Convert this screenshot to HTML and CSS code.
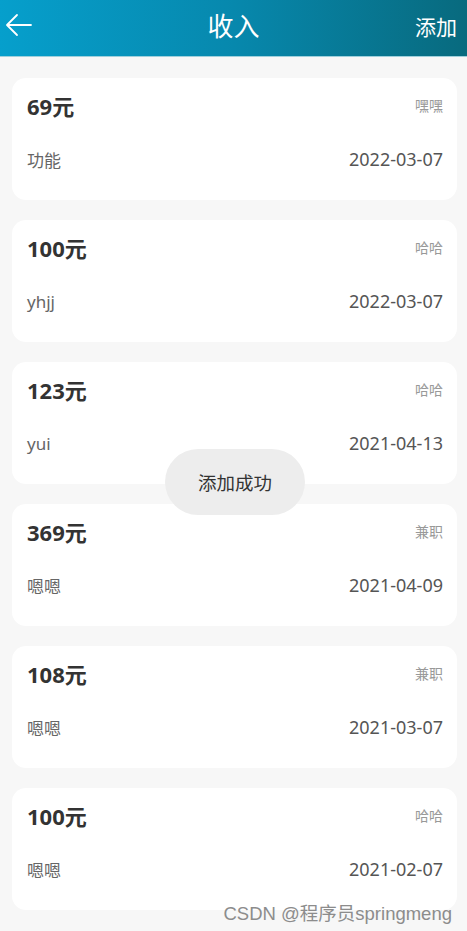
FILE: index.html
```html
<!DOCTYPE html>
<html lang="zh-CN">
<head>
<meta charset="utf-8">
<title>收入</title>
<link rel="stylesheet" href="styles.css">
</head>
<body>
<header class="topbar">
  <svg class="back" width="28" height="24" viewBox="0 0 28 24" fill="none" stroke="#fff" stroke-width="1.8" stroke-linecap="round" stroke-linejoin="round"><path d="M26 12H3M12 2L2 12l10 10"/></svg>
  <h1 class="title">收入</h1>
  <span class="add">添加</span>
</header>
<main class="list">
  <div class="card"><div class="row"><span class="amount">69元</span><span class="tag">嘿嘿</span></div><div class="row"><span class="note">功能</span><span class="date">2022-03-07</span></div></div>
  <div class="card"><div class="row"><span class="amount">100元</span><span class="tag">哈哈</span></div><div class="row"><span class="note">yhjj</span><span class="date">2022-03-07</span></div></div>
  <div class="card"><div class="row"><span class="amount">123元</span><span class="tag">哈哈</span></div><div class="row"><span class="note">yui</span><span class="date">2021-04-13</span></div></div>
  <div class="card"><div class="row"><span class="amount">369元</span><span class="tag">兼职</span></div><div class="row"><span class="note">嗯嗯</span><span class="date">2021-04-09</span></div></div>
  <div class="card"><div class="row"><span class="amount">108元</span><span class="tag">兼职</span></div><div class="row"><span class="note">嗯嗯</span><span class="date">2021-03-07</span></div></div>
  <div class="card"><div class="row"><span class="amount">100元</span><span class="tag">哈哈</span></div><div class="row"><span class="note">嗯嗯</span><span class="date">2021-02-07</span></div></div>
</main>
<div class="toast">添加成功</div>
<div class="watermark">CSDN @程序员springmeng</div>
</body>
</html>
```
FILE: styles.css
```css
* { box-sizing: border-box; }
html, body { margin: 0; padding: 0; }
body {
  width: 467px;
  height: 931px;
  overflow: hidden;
  background: #f7f7f7;
  font-family: "Noto Sans", "Noto Sans CJK SC", sans-serif;
  position: relative;
}
.topbar {
  height: 57px;
  background: linear-gradient(90deg, #069fcc 0%, #0788ad 50%, #086a7e 100%);
  border-bottom: 1px solid #9fd0dc;
  display: flex;
  align-items: center;
  justify-content: space-between;
  padding: 0 10px 0 5px;
  color: #fff;
  position: relative;
}
.back { display: block; margin-top: -6px; }
.title {
  margin: 0;
  font-size: 26px;
  font-weight: 400;
  line-height: 34px;
  position: absolute;
  left: 0; right: 0;
  text-align: center;
  top: 9px;
  pointer-events: none;
}
.add { font-size: 21px; margin-bottom: 5px; }
.list {
  padding: 21px 10px 0 12px;
  display: flex;
  flex-direction: column;
  gap: 20px;
}
.card {
  background: #fff;
  border-radius: 14px;
  height: 122px;
  padding: 14px 14px 0 15px;
  display: flex;
  flex-direction: column;
  gap: 28px;
}
.row {
  display: flex;
  justify-content: space-between;
  align-items: center;
  height: 26px;
}
.amount { font-size: 22px; font-weight: 700; color: #333; }
.tag { font-size: 14px; color: #999; }
.note { font-size: 17px; color: #666; }
.date { font-size: 18px; color: #555; }
.toast {
  position: absolute;
  left: 165px;
  top: 449px;
  width: 140px;
  height: 66px;
  border-radius: 33px;
  background: #ededed;
  color: #333;
  font-size: 18.5px;
  display: flex;
  align-items: center;
  justify-content: center;
}
.watermark {
  position: absolute;
  right: 15px;
  top: 899px;
  font-size: 18.5px;
  color: #8c8c8c;
  font-family: "Liberation Sans", "Noto Sans CJK SC", sans-serif;
}
```
